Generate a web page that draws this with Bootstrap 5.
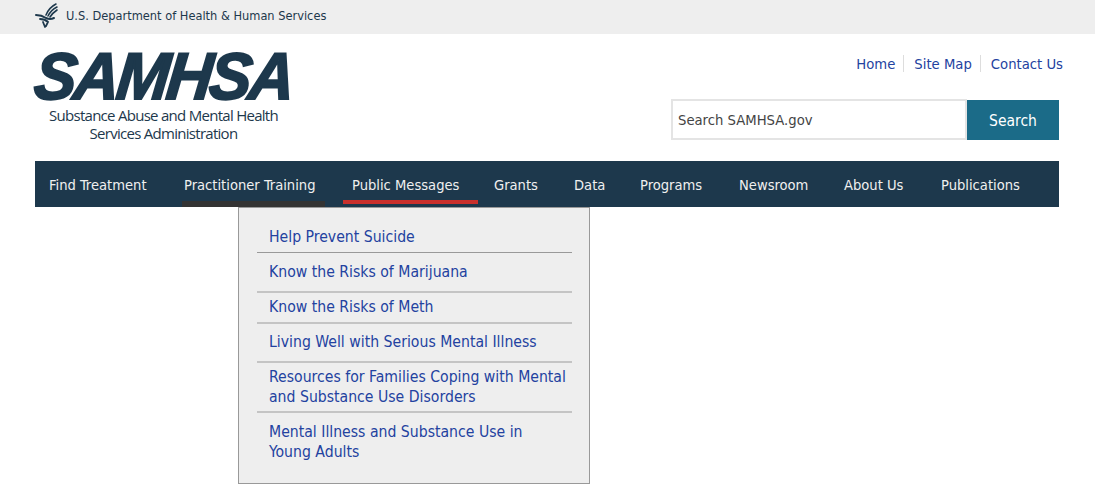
<!DOCTYPE html>
<html lang="en"><head><meta charset="utf-8"><title>SAMHSA</title>
<link href="https://cdn.jsdelivr.net/npm/bootstrap@5.3.0/dist/css/bootstrap.min.css" rel="stylesheet">
<style>
body{font-family:"DejaVu Sans",sans-serif;font-stretch:condensed;font-size:15px;color:#1d384c;background:#fff;overflow:hidden}
a{color:#2342a0;text-decoration:none}
.hhs-bar{background:#eee;height:34px;padding-left:35px;font-size:12.7px;color:#1d384c}
.hhs-bar svg{margin-right:8px;margin-top:-3px}
.hhs-bar span{margin-top:-2px}
.head-row{height:127px;padding:0 36px 0 33px}
.logo-box{width:258px;padding-top:14px;text-align:center}
.logo-word{font:italic 700 66px/56px "Liberation Sans",sans-serif;display:block;height:56px;white-space:nowrap;-webkit-text-stroke:2px #1d384c;transform:skewX(-6deg) scale(.96,1);transform-origin:left bottom;text-align:left;letter-spacing:-3px;margin-left:-1px}
.logo-sub{font:400 15px/18px "Open Sans",sans-serif;letter-spacing:-.72px;margin-top:2px;padding-left:3px}
.top-links{font-size:14.7px;padding-top:19px;margin-right:-4px}
.top-links a+a{border-left:1px solid #ddd;margin-left:8px;padding-left:10px}
.search-row{margin-top:24px;height:41px}
.search-in{width:296px;height:41px;border:2px solid #e4e4e4;padding:0 5px;font-size:14.7px;line-height:38px;color:#444;background:#fff}
.search-go{width:92px;height:40px;margin-top:1px;background:#1b6b88;color:#fff;font-size:15.5px;line-height:42px;text-align:center}
.main-nav{margin:0 36px 0 35px;height:46px;background:#1d384c;padding-left:14px;display:grid;grid-template-columns:135px 168px 142px 80px 66px 99px 105px 97px auto;justify-items:start;font-size:14.6px;line-height:47px}
.main-nav a{color:#f0f0f0;position:relative;white-space:nowrap;height:46px}
.main-nav a.was-hover::after{content:"";position:absolute;left:-2px;right:-9px;bottom:0;height:6px;background:#333}
.main-nav a.is-open::after{content:"";position:absolute;left:-9px;right:-19px;bottom:3px;height:4px;background:#c9302c}
.drop-panel{position:absolute;left:238px;top:207px;width:352px;height:277px;background:#eee;border:1px solid #999;padding:19px 17px 0 18px;font-size:15.65px;line-height:20px}
.drop-panel a{display:block;padding:9px 5px 9px 12px;border-bottom:2px solid #c4c4c4}
.drop-panel a:nth-child(1){padding-top:0;padding-bottom:5px;border-bottom:1px solid #999}
.drop-panel a:nth-child(3){padding-top:4px;padding-bottom:5px}
.drop-panel a:nth-child(4){padding-top:8px}
.drop-panel a:nth-child(5){padding-top:4px;padding-bottom:4px}
.drop-panel a:last-child{border-bottom:0}
</style></head><body>
<div class="hhs-bar d-flex align-items-center">
<svg width="23" height="25" viewBox="0 0 23 25" fill="none" stroke="#1d384c" stroke-linecap="round"><path d="M21 1C17 3 13 7 11 12M22 4C18 6 15 9 13 13M22 7C19 9 17 11 15 14" stroke-width="1.6"/><path d="M1 12C5 12 8 13 11 15C13 16 15 17 19 15" stroke-width="2"/><path d="M5 16C8 16 11 17 13 19L11 23M8 19L10 24" stroke-width="1.8"/></svg>
<span>U.S. Department of Health &amp; Human Services</span></div>
<div class="head-row d-flex justify-content-between">
<div class="logo-box"><span class="logo-word">SAMHSA</span><div class="logo-sub">Substance Abuse and Mental Health<br>Services Administration</div></div>
<div class="d-flex flex-column align-items-end">
<div class="top-links"><a href="#">Home</a><a href="#">Site Map</a><a href="#">Contact Us</a></div>
<div class="search-row d-flex"><div class="search-in">Search SAMHSA.gov</div><div class="search-go">Search</div></div>
</div></div>
<nav class="main-nav">
<a href="#">Find Treatment</a><a href="#" class="was-hover">Practitioner Training</a><a href="#" class="is-open">Public Messages</a><a href="#">Grants</a><a href="#">Data</a><a href="#">Programs</a><a href="#">Newsroom</a><a href="#">About Us</a><a href="#">Publications</a>
</nav>
<div class="drop-panel">
<a href="#">Help Prevent Suicide</a><a href="#">Know the Risks of Marijuana</a><a href="#">Know the Risks of Meth</a><a href="#">Living Well with Serious Mental Illness</a><a href="#">Resources for Families Coping with Mental and Substance Use Disorders</a><a href="#">Mental Illness and Substance Use in Young Adults</a>
</div>
<script src="https://cdn.jsdelivr.net/npm/bootstrap@5.3.0/dist/js/bootstrap.bundle.min.js"></script>
</body></html>
